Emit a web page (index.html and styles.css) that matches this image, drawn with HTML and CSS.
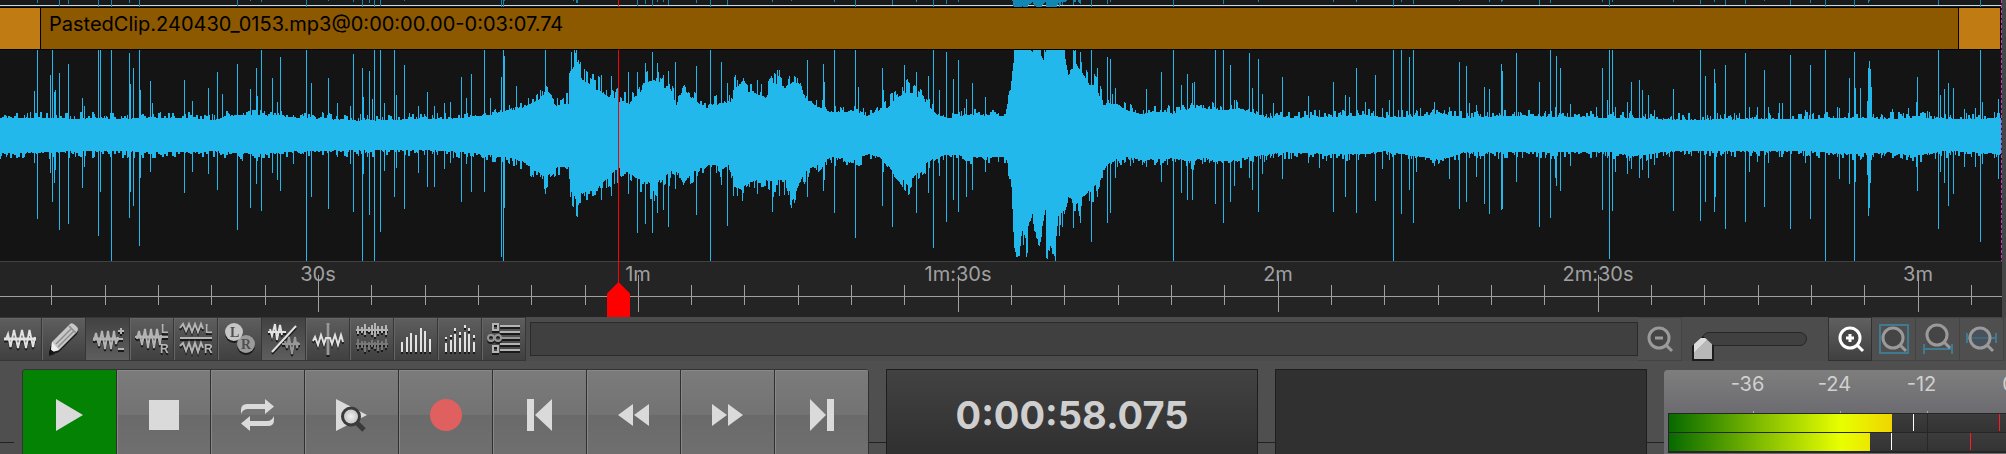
FILE: index.html
```html
<!DOCTYPE html>
<html lang="en">
<head>
  <meta charset="UTF-8">
  <meta name="viewport" content="width=device-width, initial-scale=1.0">
  <title>Audio Editor</title>
  <link rel="stylesheet" href="styles.css">
</head>
<body>
  <section class="timeline">
    <div class="tracks">
      <svg class="prev-lane" id="prevLane" viewBox="0 0 2001 8" preserveAspectRatio="none" aria-hidden="true"></svg>
      <div class="clip">
        <span class="clip-handle"></span>
        <span class="clip-name">PastedClip.240430_0153.mp3@0:00:00.00-0:03:07.74</span>
        <span class="clip-handle"></span>
      </div>
      <svg class="wave" id="wave" viewBox="0 0 2001 211" preserveAspectRatio="none" role="img" aria-label="Waveform"></svg>
    </div>
    <div class="ruler">
      <svg class="ticks" id="ticks" aria-hidden="true"></svg>
      <div class="ruler-labels">
        <span>30s</span><span>1m</span><span>1m:30s</span><span>2m</span><span>2m:30s</span><span>3m</span>
      </div>
    </div>
    <div class="playhead">
      <svg class="playhead-marker" viewBox="0 0 23 35"><path d="M11.5 0L23 11.5V35H0V11.5z"/></svg>
    </div>
  </section>

  <div class="toolbar">
    <div class="tools">
      <button class="tool" aria-label="Show waveform">
        <svg viewBox="0 0 44 44"><path class="bright" d="M6 22H38M8 22L10 17L12.500 30L16 13L20 31L24 13L28 31L31.500 13L35 30L37 20"/><path class="bright thick" d="M6 22H38"/></svg>
      </button>
      <button class="tool" aria-label="Pencil">
        <svg viewBox="0 0 44 44">
          <path d="M7 37L9 28L13 35z" fill="#0b0b0b"/>
          <path d="M9 33L10 25L28 7Q30 5 33 8L35 10Q37 12 35 15L17 33L8 36z" fill="#c8c8c8"/>
          <path d="M10 25L17 33L9 35z" fill="#efefef"/>
          <path d="M14 27L29 12M16 30L32 14M27 9L34 16" stroke="#8e8e8e" stroke-width="1.500"/>
          <path d="M7 37L8 32L12 35z" fill="#111"/>
        </svg>
      </button>
      <button class="tool on" aria-label="Vertical zoom">
        <svg viewBox="0 0 44 44"><path d="M7 22H37M8 24L10 16L13 29L16 14L19 32L22 14L25 32L28 14L30 27L32 20M32 14H38M35 11V17M32 32H38"/><path class="thick" d="M7 22H33"/></svg>
      </button>
      <button class="tool" aria-label="Split channels">
        <svg viewBox="0 0 44 44"><path d="M5 20H38M7 22L9 14L12 28L15 12L18 31L21 12L24 31L27 12L30 28L31 18"/><path class="thick" d="M6 20H32"/><text x="31" y="16">L</text><text x="30" y="36">R</text></svg>
      </button>
      <button class="tool" aria-label="Stacked channels">
        <svg viewBox="0 0 44 44"><path d="M6 11L9 7L12 14L15 7L18 15L21 7L24 15L27 7L29 12M6 21H38M6 29L9 26L12 34L15 26L18 35L21 26L24 35L27 26L29 31"/><text x="31" y="16">L</text><text x="30" y="36">R</text></svg>
      </button>
      <button class="tool" aria-label="Left and right">
        <svg viewBox="0 0 44 44"><circle cx="28" cy="27" r="9" fill="#9b9b9b"/><circle cx="16" cy="15" r="9" fill="#c6c6c6"/><text class="disc" x="12" y="20">L</text><text class="disc" x="23" y="32">R</text></svg>
      </button>
      <button class="tool on" aria-label="Phase">
        <svg viewBox="0 0 44 44"><path class="dim" d="M20 27H38M23 24L25 31L27 20L30 37L33 20L35 31L36 25"/><path class="bright" d="M6 15H24M8 12L10 19L13 7L15 23L18 8L20 18M10 35L34 9"/></svg>
      </button>
      <button class="tool" aria-label="Zero crossing">
        <svg viewBox="0 0 44 44"><path class="dim thick" d="M22 6V38"/><path class="bright" d="M7 24L9 20L12 28L15 18L18 27L20 21H24L26 27L29 18L32 28L35 18L37 25"/></svg>
      </button>
      <button class="tool" aria-label="Compare channels">
        <svg viewBox="0 0 44 44"><path d="M6 13H38M8 9V17M12 10V16M15 7V18M19 10V15M22 8V18M25 6V20M28 9V17M32 9V16M36 8V18"/><path class="dim faint" d="M6 27H38M8 22V32M12 24V31M15 24V35M19 25V33M22 23V30M25 25V32M28 23V34M32 24V33M36 22V31"/></svg>
      </button>
      <button class="tool" aria-label="Spectrum">
        <svg viewBox="0 0 44 44"><path class="bright" d="M8 25V35M13 20V35M17 16V35M22 18V35M27 11V35M31 14V35M36 22V35"/></svg>
      </button>
      <button class="tool" aria-label="Spectrum peaks">
        <svg viewBox="0 0 44 44"><path class="bright" d="M8 26V35M13 23V35M17 17V35M22 21V35M27 15V35M31 17V35M36 25V35M8 20V22M13 18V20M17 11V14M22 15V18M27 8V11M31 11V14M36 18V21"/></svg>
      </button>
      <button class="tool" aria-label="Options">
        <svg viewBox="0 0 44 44"><path d="M11 7H16V13H11zM11 29H16V35H11zM18 9H38M18 15H38M18 27H38M18 33H38"/><path class="dim" d="M18 21H38"/><circle class="dim" cx="9" cy="21" r="3"/><circle class="dim" cx="16" cy="21" r="3"/></svg>
      </button>
    </div>

    <div class="status"></div>

    <button class="zoom-btn" aria-label="Zoom out">
      <svg viewBox="0 0 44 44"><circle cx="21" cy="21" r="10"/><path d="M17 21H25M28 28L34 34"/></svg>
    </button>
    <label class="zoom-slider"><input type="range" min="0" max="100" value="0" aria-label="Zoom"></label>
    <button class="zoom-btn active" aria-label="Zoom in">
      <svg viewBox="0 0 44 44"><circle cx="21" cy="21" r="10"/><path d="M17 21H25M21 17V25M28 28L34 34"/></svg>
    </button>
    <button class="zoom-btn" aria-label="Zoom to fit">
      <svg viewBox="0 0 44 44"><path class="blue" d="M8 8H36V36H8z"/><circle cx="21" cy="21" r="10"/><path d="M28 28L34 34"/></svg>
    </button>
    <button class="zoom-btn" aria-label="Zoom to selection">
      <svg viewBox="0 0 44 44"><path class="blue" d="M8 32H36M8 27V37M36 27V37"/><circle cx="21" cy="18" r="10"/><path d="M28 25L34 31"/></svg>
    </button>
    <button class="zoom-btn" aria-label="Zoom to width">
      <svg viewBox="0 0 44 44"><path class="blue" d="M6 21H36M7 16V26M36 16V26"/><circle class="open" cx="20" cy="21" r="10"/><path d="M27 28L33 34"/></svg>
    </button>
  </div>

  <div class="transport">
    <span class="rule rule-start"></span>
    <div class="buttons">
      <button class="play" aria-label="Play"><svg viewBox="0 0 36 36"><path d="M4 2L31 18L4 34z"/></svg></button>
      <button aria-label="Stop"><svg viewBox="0 0 36 36"><path d="M3 3H33V33H3z"/></svg></button>
      <button aria-label="Loop"><svg viewBox="0 0 36 36"><path id="arrow" d="M1 17V13Q1 7 7 7H25V2L34 9.500L25 17V12H8Q3 12 1 17z"/><use href="#arrow" transform="rotate(180 17.500 18)"/></svg></button>
      <button aria-label="Audition">
        <svg viewBox="0 0 36 36">
          <defs><radialGradient id="lens"><stop offset="0" stop-color="#f0f0f0"/><stop offset="1" stop-color="#bdbdbd"/></radialGradient></defs>
          <path d="M2 2L33 18L2 34z"/>
          <circle cx="17" cy="19.500" r="8.500" fill="url(#lens)" stroke="#3a3a3a" stroke-width="3"/>
          <path d="M23 26L30 33" stroke="#3a3a3a" stroke-width="5"/>
        </svg>
      </button>
      <button class="record" aria-label="Record"><svg viewBox="0 0 36 36"><circle cx="18" cy="18" r="16"/></svg></button>
      <button aria-label="Skip to start"><svg viewBox="0 0 36 36"><path d="M5 2H12V34H5zM30 2V34L13 18z"/></svg></button>
      <button aria-label="Rewind"><svg viewBox="0 0 36 36"><path d="M17 7V29L2 18zM33 7V29L18 18z"/></svg></button>
      <button aria-label="Fast forward"><svg viewBox="0 0 36 36"><path d="M2 7V29L17 18zM18 7V29L33 18z"/></svg></button>
      <button aria-label="Skip to end"><svg viewBox="0 0 36 36"><path d="M6 2V34L22 18zM23 2H30V34H23z"/></svg></button>
    </div>
    <span class="rule"></span>
    <output class="display">0:00:58.075</output>
    <span class="rule"></span>
    <div class="display blank"></div>
    <span class="rule"></span>
    <div class="meter">
      <div class="scale"><span>-36</span><span>-24</span><span>-12</span><span>0</span></div>
      <div class="levels">
        <div class="channel"><span class="level" style="width: 223px"></span><span class="peak" style="margin-left: 21px"></span><span class="peak clip-peak" style="margin-left: 85px"></span></div>
        <div class="channel"><span class="level" style="width: 201px"></span><span class="peak" style="margin-left: 21px"></span><span class="peak clip-peak" style="margin-left: 78px"></span></div>
      </div>
    </div>
  </div>

  <script src="waveform.js"></script>
</body>
</html>
```
FILE: waveform.js
```js
const NS = 'http://www.w3.org/2000/svg';
const LANE_TOP = 50;

// Loudness outline: x, top, bottom
const outline = [
  [0,117,154],[43,117,153],[85,118,152],[184,117,153],[214,119,152],[235,114,154],[261,114,155],[299,117,152],
  [363,120,151],[427,118,151],[449,118,152],[470,116,154],[491,114,156],[504,110,158],[521,107,162],[532,101,170],
  [541,96,176],[545,90,180],[549,97,175],[556,104,169],[568,102,168],[570,68,194],[577,60,203],[581,78,196],
  [590,86,193],[598,88,190],[607,94,180],[618,100,169],[628,103,174],[637,95,180],[643,84,184],[654,78,186],
  [670,90,173],[676,103,170],[683,86,187],[689,94,176],[700,103,170],[708,107,166],[715,104,166],[721,101,172],
  [730,104,165],[734,91,189],[741,80,192],[747,90,186],[755,91,182],[766,96,182],[773,81,183],[785,86,182],
  [792,79,203],[799,81,186],[805,98,173],[817,105,166],[830,111,158],[854,110,161],[867,115,155],[879,109,158],
  [888,106,167],[894,98,176],[907,89,185],[916,94,176],[926,101,164],[935,113,158],[948,117,155],[969,114,158],
  [1005,115,158],[1009,97,170],[1011,79,186],[1013,62,232],[1014,50,253],[1017,50,261],[1019,50,260],[1021,50,230],
  [1025,50,240],[1029,50,226],[1032,69,214],[1034,50,233],[1040,50,240],[1045,60,214],[1046,50,233],[1055,50,250],
  [1058,50,220],[1064,52,214],[1068,72,200],[1076,62,206],[1082,70,200],[1089,83,192],[1097,87,186],[1102,104,173],
  [1110,102,163],[1118,104,160],[1127,109,158],[1140,113,161],[1161,110,159],[1178,114,160],[1189,107,163],
  [1204,107,159],[1221,109,163],[1238,107,161],[1247,110,158],[1268,117,155],[1285,117,153],[1336,116,155],
  [1362,114,155],[1383,117,152],[1421,115,158],[1438,112,161],[1451,115,158],[1464,117,153],[1503,115,153],
  [1575,116,153],[1610,117,153],[1635,117,157],[1669,119,152],[1806,118,152],[1853,117,155],[1892,118,153],
  [1913,117,157],[1943,118,152],[1977,118,153],[2001,117,155]
];

// Transients: x, top, bottom
const spikes = [
  [34,91,163],[37,50,219],[50,75,173],[52,50,202],[54,92,183],[55,90,170],[59,73,230],[68,64,224],[82,98,188],[84,106,167],
  [98,50,236],[100,50,192],[111,50,261],[129,53,218],[130,84,192],[133,68,206],[139,50,246],[140,90,178],[150,81,172],
  [152,103,157],[184,80,193],[192,101,172],[208,88,174],[217,72,190],[222,94,153],[237,64,230],[250,89,208],[256,68,184],
  [257,96,160],[261,50,211],[272,78,173],[277,102,180],[280,57,191],[293,115,164],[306,50,261],[311,83,197],[328,78,209],
  [337,103,157],[350,106,164],[353,54,212],[362,68,261],[363,97,174],[369,71,215],[372,99,157],[374,50,261],[380,50,232],
  [384,103,171],[394,50,197],[396,95,168],[404,65,209],[418,106,173],[427,92,187],[434,106,187],[444,103,169],
  [450,102,163],[461,77,202],[466,98,164],[471,74,192],[484,50,192],[490,98,157],[501,77,257],[503,50,261],[504,56,208],
  [516,86,165],[545,50,194],[576,50,207],[584,69,196],[601,75,200],[611,76,196],[617,88,183],[628,72,194],[637,72,233],
  [645,63,224],[652,52,233],[657,63,213],[663,75,210],[668,71,227],[675,62,189],[696,66,215],[710,50,261],[721,62,185],
  [727,83,226],[772,78,212],[777,70,185],[807,60,197],[823,64,191],[824,82,180],[834,50,213],[855,50,238],[858,87,163],
  [882,68,206],[883,90,172],[892,94,227],[904,65,190],[916,72,213],[928,76,193],[933,50,248],[939,90,176],[946,52,222],
  [953,79,200],[958,60,212],[966,99,197],[972,83,190],[985,97,172],[1073,50,228],[1080,52,223],[1091,50,242],[1097,68,197],
  [1107,57,223],[1110,59,213],[1115,88,178],[1146,89,165],[1161,72,182],[1173,50,261],[1181,85,193],[1187,74,200],
  [1192,83,200],[1194,82,165],[1215,50,204],[1223,50,223],[1230,65,202],[1234,100,186],[1249,53,178],[1252,88,190],
  [1258,59,212],[1262,94,174],[1273,103,158],[1282,77,179],[1308,96,163],[1319,110,168],[1333,82,212],[1345,95,197],
  [1349,97,160],[1356,68,213],[1365,102,157],[1375,75,201],[1382,108,169],[1389,100,160],[1393,50,261],[1401,50,214],
  [1409,57,190],[1413,50,223],[1416,110,172],[1434,102,166],[1449,107,179],[1459,62,209],[1466,66,202],[1469,103,158],
  [1476,105,177],[1484,87,204],[1489,89,214],[1501,64,210],[1502,71,209],[1516,53,182],[1539,82,227],[1550,50,218],
  [1555,107,178],[1556,56,186],[1560,68,191],[1570,104,166],[1596,107,157],[1602,68,210],[1607,100,158],[1609,50,259],
  [1612,50,211],[1615,107,172],[1627,102,174],[1631,82,169],[1639,80,178],[1642,90,170],[1648,95,178],[1654,110,165],
  [1673,89,211],[1700,50,221],[1705,76,202],[1714,69,212],[1715,83,197],[1725,65,229],[1734,113,157],[1745,53,222],
  [1749,107,172],[1757,107,162],[1764,70,207],[1768,107,163],[1779,103,157],[1782,103,157],[1790,55,229],[1805,110,163],
  [1810,65,219],[1825,50,261],[1837,107,157],[1839,108,179],[1849,78,184],[1854,52,261],[1855,88,182],[1860,88,160],
  [1867,101,175],[1868,68,216],[1869,61,208],[1870,69,183],[1871,87,160],[1892,109,157],[1908,108,157],[1916,102,167],
  [1917,77,191],[1938,50,229],[1940,95,172],[1944,89,183],[1948,83,206],[1953,88,194],[1964,109,167],[1975,108,167],
  [1980,50,242],[1982,102,164],[1998,99,179]
];

let seed = 7;
function random() {
  seed = (seed * 16807) % 2147483647;
  return seed / 2147483647;
}

function add(svg, d, color) {
  const path = document.createElementNS(NS, 'path');
  path.setAttribute('d', d);
  path.setAttribute('fill', color);
  svg.append(path);
}

// One rectangle per pixel column
function bar(x, top, bottom) {
  return `M${x} ${top}h1V${bottom}h-1z`;
}

const tops = [], bottoms = [];
let seg = 0;
let up = 0, down = 0;
for (let x = 0; x < 2001; x++) {
  while (outline[seg + 1][0] < x) seg++;
  const [x0, t0, b0] = outline[seg];
  const [x1, t1, b1] = outline[seg + 1];
  const k = (x - x0) / (x1 - x0);
  const top = t0 + (t1 - t0) * k;
  const bottom = b0 + (b1 - b0) * k;
  const spread = 1 + Math.max(0, bottom - top - 36) / 45;
  // columns come in pairs, so the edge is not a pure one-pixel comb
  if (x % 2 === 0 || random() < 0.3) {
    up = random() ** 3 * 7 * spread - spread;
    down = random() ** 3 * 7 * spread - spread;
  }
  tops[x] = Math.max(LANE_TOP, Math.round(top - up));
  // clipped audio stays flat against the top of the lane
  if (top < LANE_TOP + 1) tops[x] = LANE_TOP;
  bottoms[x] = Math.min(261, Math.round(bottom + down));
}
for (const [x, top, bottom] of spikes) {
  tops[x] = Math.min(tops[x], top);
  bottoms[x] = Math.max(bottoms[x], bottom);
}

let wave = '', prev = '';
for (let x = 0; x < 2001; x++) {
  wave += bar(x, tops[x] - LANE_TOP, bottoms[x] - LANE_TOP);
  if (bottoms[x] > 206) prev += bar(x, 0, Math.min(7, Math.ceil((bottoms[x] - 204) / 5)));
}
add(document.getElementById('wave'), wave, '#22b8ec');
add(document.getElementById('prevLane'), prev, '#1387b3');

// Ticks every 5s, a longer one every 30s
let ticks = 'M0 35h4000v1H0z';
for (let i = 1; i < 75; i++) {
  const x = Math.floor(i * 53.32 - 1.5);
  ticks += i % 6 ? `M${x} 24h1v20h-1z` : `M${x} 14h1v37h-1z`;
}
add(document.getElementById('ticks'), ticks, '#a0a0a0');
```
FILE: styles.css
```css
* {
  box-sizing: border-box;
}

body {
  margin: 0;
  height: 100vh;
  display: flex;
  flex-direction: column;
  overflow: hidden;
  background: #4f4f4f;
  font-family: Inter, "Liberation Sans", sans-serif;
  font-size: 20px;
  line-height: 24px;
}

button {
  padding: 0;
  border: 0;
  cursor: pointer;
}

svg {
  display: block;
}

/* Timeline */
.timeline {
  position: relative;
  flex: none;
  padding-right: 4px;
  background: #464646;
}

.tracks {
  padding-right: 1px;
  background: repeating-linear-gradient(#d138c4 0 3px, #2a1a29 3px 5px);
}

.prev-lane {
  width: 100%;
  height: 8px;
  background: linear-gradient(transparent 5px, #c3dde2 5px 6px, transparent 6px 7px, #000 7px), #1a1a1a;
}

.clip {
  display: flex;
  height: 42px;
  border-bottom: 1px solid #000;
  background: #8c5800;
}

.clip-handle {
  width: 41px;
  background: #c07c12;
  border-right: 1px solid #000;
}

.clip-name ~ .clip-handle {
  width: 43px;
  border-left: 1px solid #000;
}

.clip-name {
  flex: 1;
  padding: 4px 8px;
  color: #000;
  white-space: nowrap;
}

.wave {
  width: 100%;
  height: 211px;
  background: #141414;
  shape-rendering: crispEdges;
}

.ruler {
  position: relative;
  height: 56px;
  border-top: 1px solid #414141;
  background: #242424;
  overflow: hidden;
}

.ticks {
  position: absolute;
  inset: 0;
  width: 100%;
  height: 100%;
  margin-top: -1px;
}

.ruler-labels {
  display: flex;
  margin-left: 158px;
  color: #a0a0a0;
}

.ruler-labels span {
  flex: 0 0 320px;
  text-align: center;
}

.playhead {
  position: absolute;
  top: 0;
  bottom: 0;
  left: 618px;
  width: 1px;
  background: linear-gradient(#f00 7px, transparent 7px 50px, #f00 50px);
}

.playhead-marker {
  position: absolute;
  bottom: 0;
  left: -11px;
  width: 23px;
  height: 35px;
  fill: #f00;
}

/* Toolbar */
.toolbar {
  display: flex;
  flex: none;
  height: 44px;
  padding-right: 2px;
  background: #4c4c4c;
}

.tools {
  display: flex;
  margin-left: -2px;
}

.tool {
  width: 44px;
  height: 44px;
  border: 1px solid #363636;
  border-width: 1px 1px 1px 0;
  box-shadow: inset 1px 1px #666;
  background: linear-gradient(#5e5e5e, #404040);
}

.tool.on {
  background: linear-gradient(#424242, #5e5e5e);
  box-shadow: none;
}

.tool svg {
  width: 44px;
  height: 44px;
  margin-top: -1px;
  fill: none;
  stroke: #b4b4b4;
  stroke-width: 2;
  filter: drop-shadow(0 2px 0 #1a1a1a);
}

.tool svg path[fill] {
  stroke-width: 0;
}

.tool svg path[stroke] {
  stroke-width: 1.5;
}

.tool circle[fill] {
  stroke: none;
}

.tool .bright {
  stroke: #e2e2e2;
}

.tool .dim {
  stroke: #989898;
}

.tool .faint {
  stroke: #787878;
}

.tool .thick {
  stroke-width: 3;
}

.tool text {
  fill: #b4b4b4;
  stroke: none;
  font: bold 12px "Liberation Sans", sans-serif;
}

.tool .disc {
  fill: #505050;
  font: bold 14px "Liberation Serif", serif;
}

.status {
  flex: 1;
  margin: 5px 0 5px 4px;
  border: 1px solid #2a2a2a;
  background: #404040;
}

.zoom-btn {
  width: 44px;
  height: 44px;
  border: 1px solid #434343;
  border-left-width: 0;
  background: #4f4f4f;
}

.zoom-btn.active {
  border-color: #303030;
  border-left-width: 1px;
  background: linear-gradient(#606060, #404040);
}

.zoom-btn svg {
  width: 44px;
  height: 44px;
  margin-top: -1px;
  fill: none;
  stroke: #9a9a9a;
  stroke-width: 3;
}

.zoom-btn circle {
  fill: #454545;
}

.zoom-btn .open {
  fill: #456;
  fill-opacity: 0.6;
}

.zoom-btn .blue {
  stroke: #417a90;
  stroke-width: 2;
}

.zoom-btn.active svg {
  stroke: #fff;
}

.zoom-slider {
  width: 146px;
  padding: 15px 21px 0 10px;
}

.zoom-slider input {
  display: block;
  appearance: none;
  width: 115px;
  height: 29px;
  margin: 0;
  background: none;
}

.zoom-slider input::-webkit-slider-runnable-track {
  height: 14px;
  margin: 0 0 15px 10px;
  border: 1px solid #262626;
  border-radius: 7px;
  background: #404040;
}

.zoom-slider input::-webkit-slider-thumb {
  appearance: none;
  width: 22px;
  height: 25px;
  margin: 3px 0 0 -11px;
  clip-path: polygon(50% 0, 100% 40%, 100% 100%, 0 100%, 0 40%);
  background: conic-gradient(from 135deg at 50% 25%, #b8b8b8 90deg, #dcdcdc 90deg 270deg, #b8b8b8 270deg);
  border: 2px solid #1c1c1c;
}

/* Transport */
.transport {
  flex: 1;
  display: flex;
  min-height: 0;
  padding-top: 8px;
  overflow: hidden;
}

.rule {
  flex: 0 0 17px;
  height: 1px;
  margin-top: 73px;
  background: #222;
}

.rule-start {
  flex-basis: 14px;
  margin-right: 8px;
}

.buttons {
  display: flex;
  height: 90px;
  border-top: 1px solid #333;
  border-left: 1px solid #333;
  border-radius: 4px 4px 0 0;
  overflow: hidden;
}

.buttons button {
  display: grid;
  place-items: center;
  width: 94px;
  border-right: 1px solid #303030;
  box-shadow: inset 1px 1px #888;
  background: linear-gradient(#7b7b7b, #737373 50%, #6a6a6a 50%, #707070);
}

.buttons svg {
  width: 36px;
  height: 36px;
  fill: #dadada;
}

.buttons .play {
  background: #038203;
  box-shadow: none;
}

.buttons .record svg {
  fill: #e06060;
}

.display {
  flex: 0 0 372px;
  height: 90px;
  border: 1px solid #1e1e1e;
  background: linear-gradient(#424242, #2f2f2f);
  color: #cfcfcf;
  font-size: 38px;
  font-weight: bold;
  line-height: 90px;
  text-align: center;
}

.blank {
  background: #303030;
}

.meter {
  flex: 1;
  min-width: 0;
  height: 84px;
  margin-top: 1px;
  padding-left: 4px;
  border-radius: 4px 0 0 0;
  background: linear-gradient(#7e7e7e, #6c6b70 43px);
  overflow: hidden;
}

.scale {
  display: flex;
  height: 43px;
  padding: 2px 0 0 36px;
  color: #d0d0d0;
}

.scale span {
  flex: 0 0 87px;
  height: 41px;
  text-align: center;
  background: linear-gradient(#aaa, #aaa) 49px 39px / 1px 2px no-repeat;
}

.levels {
  height: 40px;
  padding: 1px 0 1px 1px;
  background: #262626;
}

.channel {
  display: flex;
  height: 18px;
  margin-bottom: 1px;
  background: linear-gradient(90deg, transparent 258px, #282828 258px 259px, transparent 259px), linear-gradient(#3c3c3c, #333);
}

.level {
  background: linear-gradient(90deg, #066900, #7fbb00 90px, #e8ff00 172px, #f0d000 230px);
}

.peak {
  width: 1px;
  height: 17px;
  background: #fff;
}

.clip-peak {
  background: #ff1a24;
}
```
